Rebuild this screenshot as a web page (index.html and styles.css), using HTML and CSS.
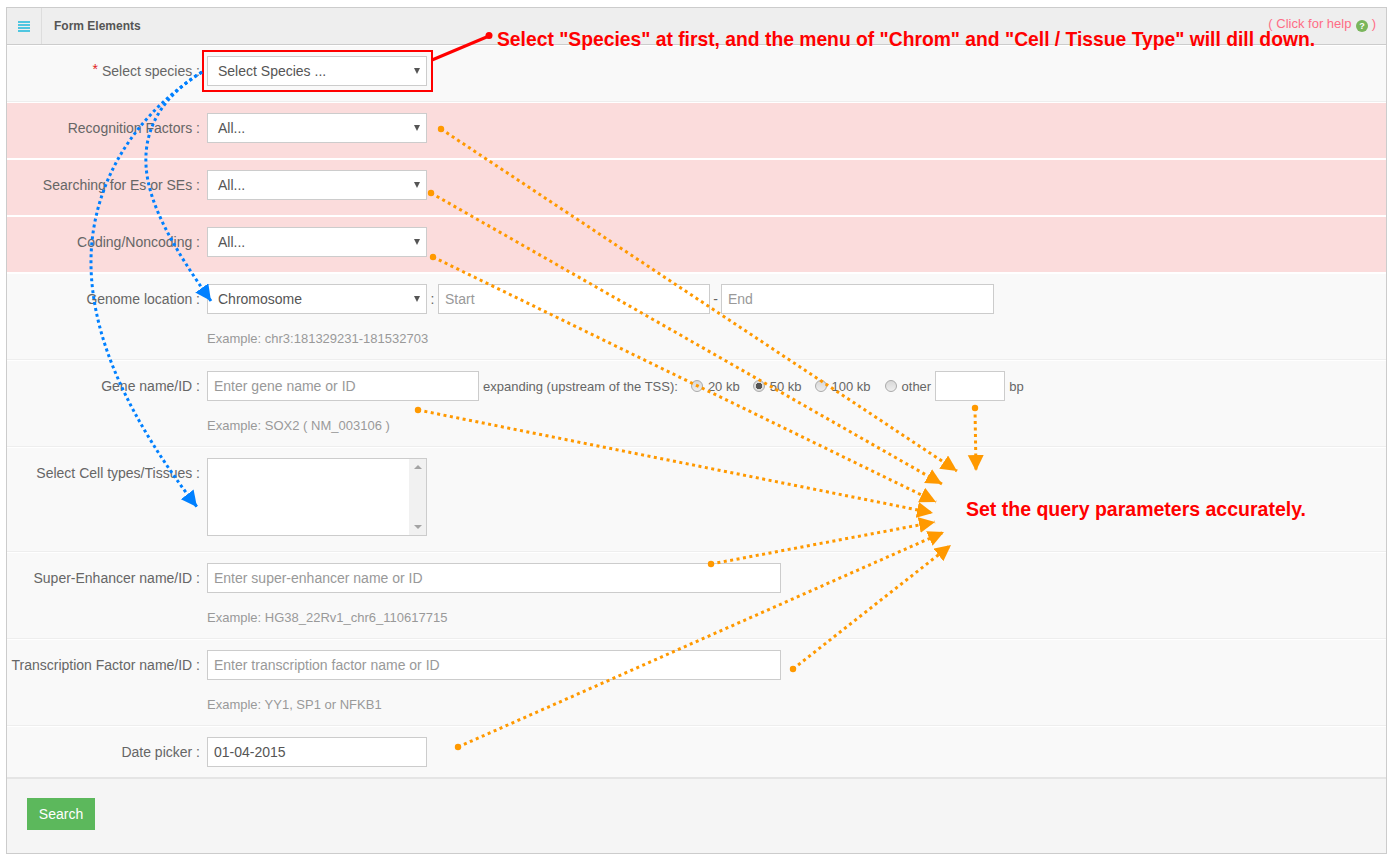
FILE: index.html
```html
<!DOCTYPE html>
<html lang="en">
<head>
    <meta charset="UTF-8">
    <title>Form Elements</title>
    <link rel="stylesheet" href="styles.css">
</head>
<body>

    <div class="panel">
        <div class="panel-head">
            <div class="menu-cell"><span class="menu-icon"></span></div>
            <div class="panel-title">Form Elements</div>
            <div class="help-link">( Click for help <span class="help-icon">?</span> )</div>
        </div>

        <form>
            <div class="row">
                <label class="row-label"><span class="req">*</span> Select species :</label>
                <div class="field">
                    <div class="select w220">Select Species ...</div>
                </div>
            </div>
            <div class="row pink">
                <label class="row-label">Recognition Factors :</label>
                <div class="field">
                    <div class="select w220">All...</div>
                </div>
            </div>
            <div class="row pink">
                <label class="row-label">Searching for Es or SEs :</label>
                <div class="field">
                    <div class="select w220">All...</div>
                </div>
            </div>
            <div class="row pink">
                <label class="row-label">Coding/Noncoding :</label>
                <div class="field">
                    <div class="select w220">All...</div>
                </div>
            </div>
            <div class="row">
                <label class="row-label">Genome location :</label>
                <div class="field">
                    <div class="inline">
                        <div class="select w220">Chromosome</div>
                        <span class="sep-colon">:</span>
                        <input class="text w272" type="text" placeholder="Start">
                        <span class="sep-dash">-</span>
                        <input class="text w273" type="text" placeholder="End">
                    </div>
                    <div class="example">Example: chr3:181329231-181532703</div>
                </div>
            </div>
            <div class="row">
                <label class="row-label">Gene name/ID :</label>
                <div class="field">
                    <div class="inline small">
                        <input class="text w272" type="text" placeholder="Enter gene name or ID">
                        <span class="expand">expanding (upstream of the TSS):</span>
                        <input class="radio" type="radio" name="kb"><span class="kb">20 kb</span>
                        <input class="radio on" type="radio" name="kb"><span class="kb">50 kb</span>
                        <input class="radio" type="radio" name="kb"><span class="kb">100 kb</span>
                        <input class="radio r3" type="radio" name="kb"><span class="kb">other</span>
                        <input class="text w70" type="text">
                        <span class="bp">bp</span>
                    </div>
                    <div class="example">Example: SOX2 ( NM_003106 )</div>
                </div>
            </div>
            <div class="row">
                <label class="row-label">Select Cell types/Tissues :</label>
                <div class="field">
                    <div class="listbox">
                        <div class="scrollbar">
                            <span class="arrow-up"></span>
                            <span class="arrow-down"></span>
                        </div>
                    </div>
                </div>
            </div>
            <div class="row">
                <label class="row-label">Super-Enhancer name/ID :</label>
                <div class="field">
                    <input class="text w574" type="text" placeholder="Enter super-enhancer name or ID">
                    <div class="example">Example: HG38_22Rv1_chr6_110617715</div>
                </div>
            </div>
            <div class="row">
                <label class="row-label">Transcription Factor name/ID :</label>
                <div class="field">
                    <input class="text w574" type="text" placeholder="Enter transcription factor name or ID">
                    <div class="example">Example: YY1, SP1 or NFKB1</div>
                </div>
            </div>
            <div class="row last">
                <label class="row-label">Date picker :</label>
                <div class="field">
                    <input class="text w220" type="text" value="01-04-2015">
                </div>
            </div>
            <div class="form-foot">
                <button type="button" class="btn-search">Search</button>
            </div>
        </form>
    </div>

    <!-- hand drawn annotations on top of the form -->
    <svg class="marks" width="1394" height="860" viewBox="0 0 1394 860">
        <defs>
            <marker id="headBlue" markerUnits="userSpaceOnUse" markerWidth="17" markerHeight="17" refX="16" refY="8" orient="auto">
                <path d="M0 0 L16 8 L0 16 Z" fill="#0080ff"/>
            </marker>
            <marker id="headOrange" markerUnits="userSpaceOnUse" markerWidth="17" markerHeight="17" refX="16" refY="8" orient="auto">
                <path d="M0 0 L16 8 L0 16 Z" fill="#ff9900"/>
            </marker>
            <marker id="dotOrange" markerUnits="userSpaceOnUse" markerWidth="8" markerHeight="8" refX="4" refY="4">
                <circle cx="4" cy="4" r="3.2" fill="#ff9900"/>
            </marker>
        </defs>

        <rect class="red-box" x="203" y="51" width="229" height="40"/>
        <line class="red-line" x1="432" y1="60" x2="489" y2="36"/>
        <circle cx="489" cy="35.5" r="3.5" fill="#ff0000"/>

        <path class="blue" d="M202 72 C120 125 90 200 91 265 C92 340 130 420 197 507"/>
        <path class="blue" d="M202 72 C165 95 144 125 146 165 C148 205 175 250 211 301"/>

        <line class="orange" x1="441" y1="129" x2="957" y2="471"/>
        <line class="orange" x1="431" y1="193" x2="942" y2="484"/>
        <line class="orange" x1="433" y1="257" x2="936" y2="502"/>
        <line class="orange" x1="418" y1="410" x2="933" y2="513"/>
        <line class="orange" x1="711" y1="564" x2="935" y2="522"/>
        <line class="orange" x1="458" y1="747" x2="944" y2="532"/>
        <line class="orange" x1="793" y1="669" x2="951" y2="545"/>
        <line class="orange" x1="975" y1="408" x2="976" y2="471"/>
    </svg>

    <div class="note note-top">Select "Species" at first, and the menu of "Chrom" and "Cell / Tissue Type" will dill down.</div>
    <div class="note note-side">Set the query parameters accurately.</div>

</body>
</html>
```

FILE: styles.css
```css
* {
    box-sizing: border-box;
}
body {
    margin: 0;
    padding: 7px 7px 0 6px;
    background: #fff;
    font-family: "Liberation Sans", Arial, sans-serif;
    font-size: 14px;
    color: #666;
}
.panel {
    width: 1381px;
    border: 1px solid #ccc;
    background: #f9f9f9;
}
.panel-head {
    display: flex;
    height: 37px;
    background: #eee;
    border-bottom: 1px solid #ccc;
}
.menu-cell {
    width: 35px;
    border-right: 1px solid #ddd;
    display: flex;
    align-items: center;
    justify-content: center;
}
.menu-icon {
    display: block;
    width: 12px;
    height: 11px;
    background: repeating-linear-gradient(#4fc6e0 0, #4fc6e0 2px, transparent 2px, transparent 3px);
}
.panel-title {
    margin-left: 12px;
    line-height: 36px;
    font-size: 12px;
    font-weight: bold;
    color: #555;
}
.help-link {
    margin-left: auto;
    margin-right: 10px;
    padding-top: 9px;
    font-size: 13px;
    line-height: 14px;
    color: #ff6c85;
}
.help-icon {
    display: inline-block;
    width: 12px;
    height: 12px;
    margin: 0 0 0 1px;
    border-radius: 50%;
    background: #7ab55c;
    color: #fff;
    font-size: 9px;
    font-weight: bold;
    line-height: 12px;
    text-align: center;
    vertical-align: -1px;
}

.row {
    display: flex;
    padding: 10px 0 15px;
    border-top: 1px solid #fff;
    border-bottom: 1px solid #eee;
}
.row.pink {
    background: #fbdcdc;
    background-clip: padding-box;
    border-bottom-color: #fff;
}
.row.last {
    padding-bottom: 10px;
    border-bottom: none;
}
.row-label {
    width: 193px;
    flex: none;
    text-align: right;
    line-height: 30px;
}
.req {
    color: #e02222;
    line-height: 0;
    vertical-align: 2px;
}
.field {
    margin-left: 7px;
}
.inline {
    display: flex;
    align-items: center;
}

.select,
.text {
    display: block;
    height: 30px;
    border: 1px solid #ccc;
    background: #fff;
    font-family: "Liberation Sans", Arial, sans-serif;
    font-size: 14px;
    color: #555;
}
.select {
    position: relative;
    padding-left: 10px;
    line-height: 28px;
}
.select::after {
    content: "";
    position: absolute;
    right: 6px;
    top: 11px;
    border-left: 3px solid transparent;
    border-right: 3px solid transparent;
    border-top: 6px solid #555;
}
.text {
    padding: 0 6px;
    outline: none;
}
.text::placeholder {
    color: #999;
    opacity: 1;
}
.w220 { width: 220px; }
.w272 { width: 272px; }
.w273 { width: 273px; }
.w574 { width: 574px; }
.w70 { width: 70px; }

.sep-colon {
    width: 11px;
    text-align: center;
}
.sep-dash {
    width: 11px;
    text-align: center;
}
.small {
    font-size: 13px;
}
.expand {
    margin-left: 4px;
}
.kb {
    margin-left: 5px;
}
.bp {
    margin-left: 4px;
}
.radio {
    appearance: none;
    width: 12px;
    height: 12px;
    margin: 0 0 0 13px;
    border: 1px solid #aaa;
    border-radius: 50%;
    background: linear-gradient(#d8d8d8, #eee);
}
.radio.r3 {
    margin-left: 14px;
}
.radio.on {
    background: radial-gradient(circle, #555 0, #555 3px, #ddd 3.5px);
}
.kb + .text {
    margin-left: 4px;
}
.example {
    padding-top: 19px;
    margin-bottom: -1px;
    font-size: 13px;
    line-height: 12px;
    color: #999;
}

.listbox {
    display: flex;
    justify-content: flex-end;
    width: 220px;
    height: 78px;
    border: 1px solid #ccc;
    background: #fff;
}
.scrollbar {
    display: flex;
    flex-direction: column;
    justify-content: space-between;
    align-items: center;
    width: 17px;
    padding: 6px 0;
    background: #f1f1f1;
}
.arrow-up {
    border-left: 4px solid transparent;
    border-right: 4px solid transparent;
    border-bottom: 4px solid #a3a3a3;
}
.arrow-down {
    border-left: 4px solid transparent;
    border-right: 4px solid transparent;
    border-top: 4px solid #a3a3a3;
}

.form-foot {
    padding: 19px 20px 23px;
    border-top: 2px solid #e5e5e5;
    background: #f5f5f5;
}
.btn-search {
    display: block;
    width: 68px;
    height: 32px;
    padding: 0;
    border: none;
    background: #5cb85c;
    color: #fff;
    font-family: "Liberation Sans", Arial, sans-serif;
    font-size: 14px;
}

/* annotations */
.marks {
    position: absolute;
    left: 0;
    top: 0;
    pointer-events: none;
}
.red-box {
    fill: none;
    stroke: #f00;
    stroke-width: 2;
}
.red-line {
    stroke: #f00;
    stroke-width: 3;
}
.blue {
    fill: none;
    stroke: #0080ff;
    stroke-width: 3;
    stroke-dasharray: 3 3;
    marker-end: url(#headBlue);
}
.orange {
    stroke: #ff9900;
    stroke-width: 3;
    stroke-dasharray: 3 3.5;
    marker-start: url(#dotOrange);
    marker-end: url(#headOrange);
}
.note {
    position: absolute;
    font-weight: bold;
    color: #f00;
    white-space: nowrap;
}
.note-top {
    left: 497px;
    top: 28px;
    font-size: 19.3px;
    line-height: 24px;
}
.note-side {
    left: 966px;
    top: 497px;
    font-size: 19.5px;
    line-height: 24px;
}
```
